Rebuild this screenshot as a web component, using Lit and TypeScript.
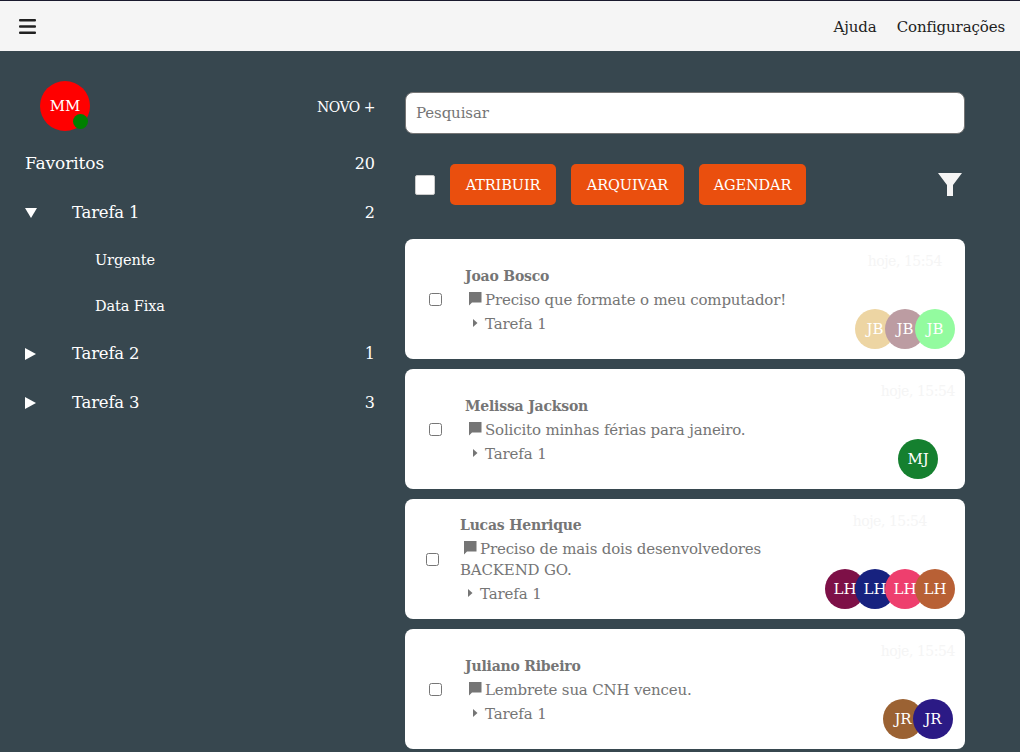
import { LitElement, html, css, svg } from "lit";
import { customElement } from "lit/decorators.js";

const chatIcon = svg`<path d="M4 2h12.500v10.500H7L4 15.500z"/>`;
const smallArrow = svg`<path d="M8 5l4.500 4-4.500 4z"/>`;

interface Task {
  name: string;
  message: string;
  tight?: boolean;
  timeRight: number;
  avatarRight: number;
  initials: string;
  colors: string[];
}

const TASKS: Task[] = [
  { name: "Joao Bosco", message: "Preciso que formate o meu computador!", timeRight: 23, avatarRight: 10, initials: "JB", colors: ["#edd5a3", "#bc9ca2", "#93fb9f"] },
  { name: "Melissa Jackson", message: "Solicito minhas férias para janeiro.", timeRight: 10, avatarRight: 27, initials: "MJ", colors: ["#15802f"] },
  { name: "Lucas Henrique", message: "Preciso de mais dois desenvolvedores BACKEND GO.", tight: true, timeRight: 38, avatarRight: 10, initials: "LH", colors: ["#7d1047", "#17227f", "#ee3f6e", "#b86035"] },
  { name: "Juliano Ribeiro", message: "Lembrete sua CNH venceu.", timeRight: 10, avatarRight: 12, initials: "JR", colors: ["#9b6233", "#2b1a85"] },
];

const BUTTONS = [
  { label: "ATRIBUIR", width: 106 },
  { label: "ARQUIVAR", width: 113 },
  { label: "AGENDAR", width: 107 },
];

@customElement("app-root")
export class AppRoot extends LitElement {
  static styles = css`
    :host {
      display: block;
      height: 100vh;
      overflow: hidden;
      background: #37474f;
      font-family: "DejaVu Serif", serif;
      font-size: 15px;
      letter-spacing: -0.12px;
    }
    .topbar {
      height: 50px;
      border-top: 1px solid #1a1a2e;
      background: #f5f5f5;
      display: flex;
      align-items: center;
      padding: 0 15px 0 19px;
      color: #212121;
    }
    .bars {
      width: 17px;
      height: 15px;
      display: block;
    }
    .links {
      margin-left: auto;
      display: flex;
      gap: 20px;
      padding-top: 2px;
    }
    .page {
      display: flex;
    }
    .side {
      width: 350px;
      padding-left: 25px;
      color: #fff;
    }
    .profile {
      height: 88px;
      display: flex;
      align-items: center;
      justify-content: space-between;
    }
    .me {
      position: relative;
      width: 50px;
      height: 50px;
      margin-left: 15px;
      margin-top: 22px;
      border-radius: 50%;
      background: #f00;
      display: flex;
      align-items: center;
      justify-content: center;
    }
    .dot {
      position: absolute;
      width: 15px;
      height: 15px;
      right: 2px;
      bottom: 2px;
      border-radius: 50%;
      background: #008000;
    }
    .novo {
      margin-top: 24px;
      font-size: 14px;
      letter-spacing: -0.5px;
    }
    .row {
      height: 49px;
      display: flex;
      align-items: center;
      font-size: 16.500px;
      letter-spacing: -0.2px;
    }
    .row.top {
      font-size: 17px;
      letter-spacing: -0.1px;
      padding-bottom: 1px;
      box-sizing: border-box;
    }
    .row .count {
      margin-left: auto;
      font-size: 16px;
      letter-spacing: 0;
    }
    .row .tri {
      width: 47px;
      display: flex;
      flex: none;
    }
    .tri svg {
      display: block;
    }
    .sub {
      height: 46px;
      display: flex;
      align-items: center;
      padding-left: 70px;
      font-size: 14.500px;
    }
    .main {
      width: 560px;
      margin-left: 30px;
      padding-top: 41px;
    }
    .search {
      display: block;
      width: 100%;
      height: 42px;
      box-sizing: border-box;
      border: 1px solid #757575;
      border-radius: 8px;
      padding: 0 10px;
      font: inherit;
      letter-spacing: inherit;
      background: #fff;
      outline: none;
    }
    .search::placeholder {
      color: #757575;
      opacity: 1;
    }
    .actions {
      display: flex;
      align-items: center;
      margin-top: 30px;
      height: 41px;
      padding-left: 10px;
    }
    .all {
      width: 20px;
      height: 20px;
      box-sizing: border-box;
      background: #fff;
      border: 1px solid #ccc;
      border-radius: 2px;
      margin-right: 15px;
    }
    .btn {
      height: 41px;
      padding: 0;
      margin-right: 15px;
      border: none;
      border-radius: 5px;
      background: #ea4f0e;
      color: #fff;
      font: inherit;
      font-size: 14.500px;
      letter-spacing: -0.1px;
    }
    .filter {
      width: 24px;
      height: 24px;
      margin-left: auto;
      margin-right: 3px;
      fill: #f5f5f5;
    }
    .list {
      margin-top: 34px;
      display: flex;
      flex-direction: column;
      gap: 10px;
    }
    .card {
      height: 120px;
      flex: none;
      background: #fff;
      border-radius: 8px;
      display: flex;
      color: #757575;
    }
    .check {
      width: 60px;
      flex: none;
      display: flex;
      align-items: center;
      justify-content: center;
    }
    .check input {
      margin: 0;
    }
    .card.tight .check {
      width: 55px;
    }
    .body {
      width: 330px;
      flex: none;
      align-self: center;
      line-height: 21px;
      padding-top: 2px;
    }
    .name {
      font-weight: 700;
      font-size: 14px;
      letter-spacing: -0.2px;
      margin-bottom: 3px;
    }
    .msg {
      margin-bottom: 3px;
      letter-spacing: -0.17px;
    }
    .ico {
      width: 20px;
      height: 18px;
      vertical-align: -3px;
      fill: #757575;
    }
    .right {
      margin-left: auto;
      display: flex;
      flex-direction: column;
      align-items: flex-end;
      justify-content: space-between;
      padding: 11px 0 10px;
      box-sizing: border-box;
    }
    .time {
      color: #f5f5f5;
      font-size: 14px;
      letter-spacing: -0.45px;
      line-height: 22px;
    }
    .stack {
      display: flex;
    }
    .avatar {
      width: 40px;
      height: 40px;
      margin-left: -10px;
      border-radius: 50%;
      color: #fff;
      display: flex;
      align-items: center;
      justify-content: center;
    }
    .avatar:first-child {
      margin-left: 0;
    }
  `;

  private tri(open: boolean) {
    return html`<span class="tri">
      <svg width="12" height="12" viewBox="0 0 12 12" fill="#fff">
        ${open ? svg`<path d="M0 1h12L6 11z"/>` : svg`<path d="M0 0l11 6-11 6z"/>`}
      </svg>
    </span>`;
  }

  private card(t: Task) {
    return html`
      <div class="card ${t.tight ? "tight" : ""}">
        <div class="check"><input type="checkbox" /></div>
        <div class="body">
          <div class="name">${t.name}</div>
          <div class="msg">
            <svg class="ico" viewBox="0 0 20 18">${chatIcon}</svg>${t.message}
          </div>
          <div>
            <svg class="ico" viewBox="0 0 20 18">${smallArrow}</svg>Tarefa 1
          </div>
        </div>
        <div class="right">
          <div class="time" style="margin-right:${t.timeRight}px">hoje, 15:54</div>
          <div class="stack" style="margin-right:${t.avatarRight}px">
            ${t.colors.map(
              (c) => html`<div class="avatar" style="background:${c}">${t.initials}</div>`
            )}
          </div>
        </div>
      </div>
    `;
  }

  render() {
    return html`
      <div class="topbar">
        <svg class="bars" viewBox="0 0 17 15" fill="#212121">
          <rect y="0" width="17" height="2.500" rx="1" />
          <rect y="6.250" width="17" height="2.500" rx="1" />
          <rect y="12.500" width="17" height="2.500" rx="1" />
        </svg>
        <div class="links"><span>Ajuda</span><span>Configurações</span></div>
      </div>
      <div class="page">
        <div class="side">
          <div class="profile">
            <div class="me">MM<span class="dot"></span></div>
            <div class="novo">NOVO +</div>
          </div>
          <div class="row top"><span>Favoritos</span><span class="count">20</span></div>
          <div class="row">${this.tri(true)}<span>Tarefa 1</span><span class="count">2</span></div>
          <div class="sub">Urgente</div>
          <div class="sub">Data Fixa</div>
          <div class="row">${this.tri(false)}<span>Tarefa 2</span><span class="count">1</span></div>
          <div class="row">${this.tri(false)}<span>Tarefa 3</span><span class="count">3</span></div>
        </div>
        <div class="main">
          <input class="search" placeholder="Pesquisar" />
          <div class="actions">
            <div class="all"></div>
            ${BUTTONS.map(
              (b) => html`<button class="btn" style="width:${b.width}px">${b.label}</button>`
            )}
            <svg class="filter" viewBox="0 0 24 24"><path d="M0 0h24L15 12v11H9V12z" /></svg>
          </div>
          <div class="list">${TASKS.map((t) => this.card(t))}</div>
        </div>
      </div>
    `;
  }
}
